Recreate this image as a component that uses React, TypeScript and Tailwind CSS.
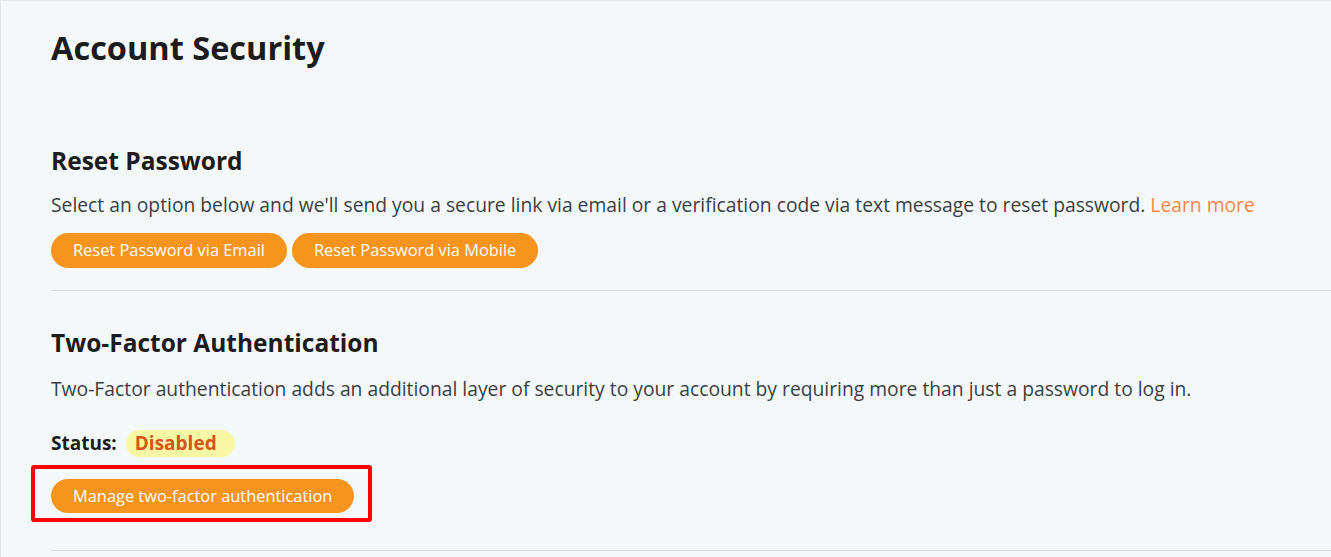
export default function App() {
  return (
    <div
      className="min-h-[557px] w-full overflow-hidden border-l border-t border-[#e3e6e8] bg-[#f5f8fa] pl-[50px] text-[#1c1c1c]"
      style={{ fontFamily: '"Open Sans", "Liberation Sans", sans-serif' }}
    >
      <h1 className="pt-[29px] text-[32.5px] font-bold leading-[36px]">Account Security</h1>

      <section className="mt-[80px]">
        <h2 className="text-[24.5px] font-bold leading-[30px]">Reset Password</h2>
        <p className="mt-[15px] text-[19.3px] leading-[27px] text-[#3b3f44]">
          Select an option below and we'll send you a secure link via email or a verification code via text message to
          reset password. <a className="text-[#f7894a]">Learn more</a>
        </p>
        <div className="mt-[15px] flex gap-[5px]">
          <button
            type="button"
            className="h-[35px] rounded-full bg-[#f7941d] px-[22px] text-[16.4px] text-white"
          >
            Reset Password via Email
          </button>
          <button
            type="button"
            className="h-[35px] rounded-full bg-[#f7941d] px-[22px] text-[16.4px] text-white"
          >
            Reset Password via Mobile
          </button>
        </div>
        <div className="mt-[22px] h-px bg-[#dcdee0]" />
      </section>

      <section className="mt-[37px]">
        <h2 className="text-[24.5px] font-bold leading-[30px]">Two-Factor Authentication</h2>
        <p className="mt-[17px] text-[19.3px] leading-[27px] text-[#3b3f44]">
          Two-Factor authentication adds an additional layer of security to your account by requiring more than just a
          password to log in.
        </p>
        <div className="mt-[28px] flex items-center text-[19px] leading-[27px]">
          <span className="font-bold">Status:</span>
          <span className="ml-[9px] rounded-[14px] bg-[#f8f8a4] pl-[9px] pr-[18px] font-bold text-[#d9531e]">
            Disabled
          </span>
        </div>
        <div className="-ml-[20px] mt-[8px] inline-flex rounded-[3px] border-[4px] border-[#ff0000] pb-[5px] pl-[16px] pr-[14px] pt-[10px]">
          <button
            type="button"
            className="h-[34px] rounded-full bg-[#f7941d] px-[22px] text-[16.4px] text-white"
          >
            Manage two-factor authentication
          </button>
        </div>
        <div className="mt-[28px] h-px bg-[#dcdee0]" />
      </section>
    </div>
  )
}
